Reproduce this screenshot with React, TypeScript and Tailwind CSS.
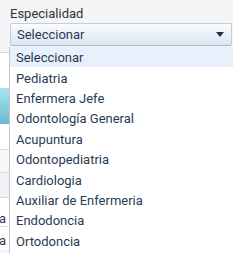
import React from 'react';

const options = [
  'Seleccionar',
  'Pediatria',
  'Enfermera Jefe',
  'Odontología General',
  'Acupuntura',
  'Odontopediatria',
  'Cardiologia',
  'Auxiliar de Enfermeria',
  'Endodoncia',
  'Ortodoncia',
];

export default function App() {
  return (
    <div className="relative w-[233px] h-[253px] overflow-hidden bg-[#f4f5f7] font-['Roboto',sans-serif]">
      {/* Field */}
      <div className="pl-[10px] pt-[5px]">
        <label className="block text-[13px] leading-[18px] text-[#333333]">Especialidad</label>
        <div className="flex items-center justify-between h-[23px] w-[222px] pl-[6px] pr-[7px] rounded-[2px] border border-[#c6ced9] border-b-[#aeb8c5] bg-gradient-to-b from-[#fbfcfe] to-[#dbe5f2]">
          <span className="text-[13px] leading-none text-[#2a3a52]">Seleccionar</span>
          <svg width="8" height="5" viewBox="0 0 8 5">
            <path d="M0 0H8L4 5Z" fill="#1e2f4d" />
          </svg>
        </div>
      </div>

      {/* Content behind the dropdown */}
      <div className="flex flex-col w-[40px] mt-[6px]">
        <div className="h-[36px] border-t border-[#d3d6da] bg-white" />
        <div className="h-[36px] bg-gradient-to-b from-[#a7e2f3] to-[#6cbccf]" />
        <div className="h-[25px] bg-white" />
        <div className="h-[23px] border-t border-[#d9dcdf] bg-[#f5f7f9]" />
        <div className="h-[25px] border-t border-[#d9dcdf] bg-[#eef2f7]" />
        <div className="h-[29px] border-t border-[#d9dcdf] bg-white flex items-end">
          <span className="text-[13px] leading-[15px] text-[#2a3a52] -ml-[1px]">a</span>
        </div>
        <div className="h-[24px] border-t border-[#d9dcdf] bg-white flex items-end">
          <span className="text-[13px] leading-[18px] text-[#2a3a52] -ml-[1px]">a</span>
        </div>
      </div>

      {/* Open dropdown list */}
      <ul className="absolute top-[47px] left-[9px] right-0 bottom-0 bg-white border-l border-[#c3c7cc]">
        {options.map((o, i) => (
          <li
            key={o}
            className={`flex items-center h-[20.4px] pl-[6px] pt-[1px] text-[13px] leading-none text-[#283b55] ${
              i === 0 ? 'bg-[#e8f0fc]' : ''
            }`}
          >
            {o}
          </li>
        ))}
      </ul>
    </div>
  );
}
